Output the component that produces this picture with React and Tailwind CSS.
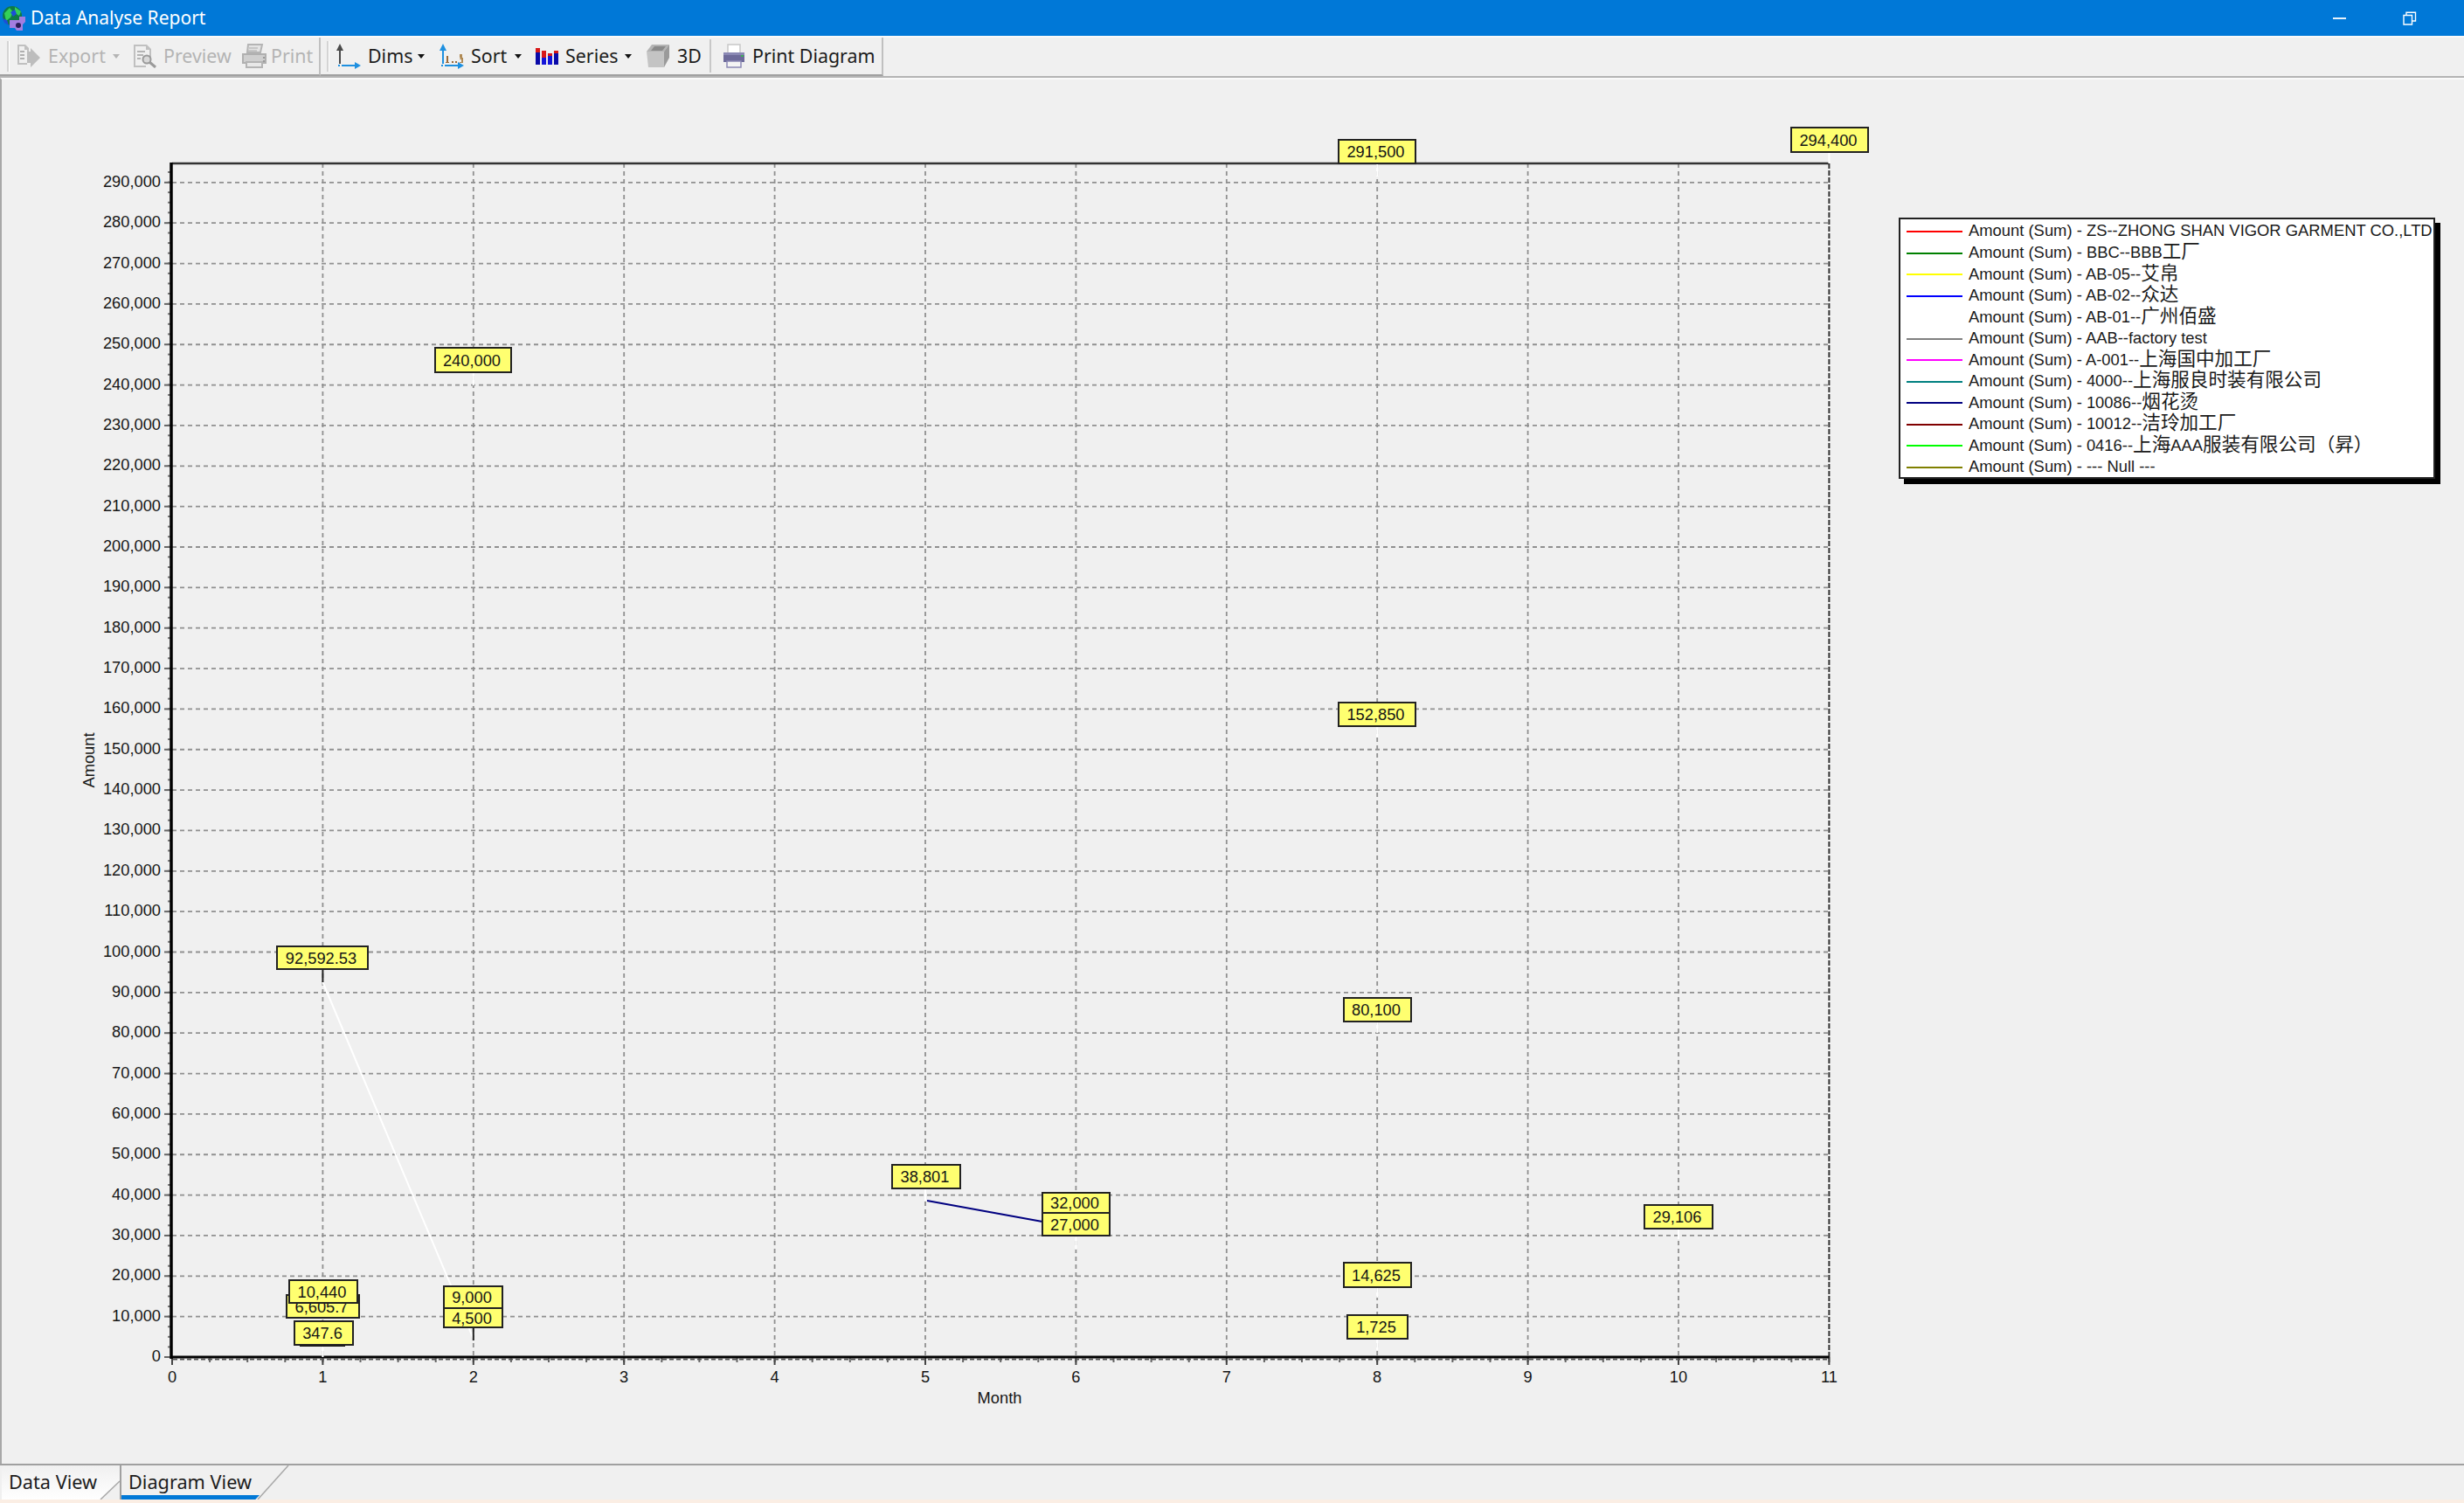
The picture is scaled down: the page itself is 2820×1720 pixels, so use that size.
import React from 'react'

const uiFont = 'font-[Noto_Sans,sans-serif]'
const chartFont = 'font-[Liberation_Sans,Noto_Sans_CJK_SC,sans-serif]'

const X0 = 197
const STEP_X = 172.4
const Y0 = 1553
const STEP_Y = 46.35
const TOP = 187
const RIGHT = X0 + STEP_X * 11

const xAt = (n) => X0 + STEP_X * n
const yAt = (v) => Y0 - (v / 10000) * STEP_Y

const yTicks = Array.from({ length: 30 }, (_, i) => i)
const xTicks = Array.from({ length: 12 }, (_, i) => i)
const minorY = Array.from({ length: 118 }, (_, i) => i)
const minorX = Array.from({ length: 45 }, (_, i) => i)

// boxes are listed bottom to top, same as the chart paints them
const boxes = [
  { t: '92,592.53', x: 317, y: 1083, w: 104, h: 26 },
  { t: '6,605.7', x: 328, y: 1482, w: 83, h: 26 },
  { t: '10,440', x: 331, y: 1465, w: 78, h: 26 },
  { t: '347.6', x: 337, y: 1512, w: 67, h: 27 },
  { t: '4,500', x: 508, y: 1497, w: 67, h: 22 },
  { t: '9,000', x: 508, y: 1472, w: 67, h: 25 },
  { t: '240,000', x: 498, y: 398, w: 87, h: 28 },
  { t: '38,801', x: 1021, y: 1333, w: 78, h: 27 },
  { t: '27,000', x: 1193, y: 1388, w: 77, h: 26 },
  { t: '32,000', x: 1193, y: 1365, w: 77, h: 23 },
  { t: '291,500', x: 1532, y: 160, w: 88, h: 27 },
  { t: '152,850', x: 1532, y: 804, w: 88, h: 27 },
  { t: '80,100', x: 1538, y: 1142, w: 77, h: 27 },
  { t: '14,625', x: 1538, y: 1445, w: 77, h: 28 },
  { t: '1,725', x: 1542, y: 1505, w: 69, h: 27 },
  { t: '29,106', x: 1882, y: 1379, w: 78, h: 27 },
  { t: '294,400', x: 2050, y: 146, w: 88, h: 28 },
]

const whiteStems = [
  [xAt(1), 1539, 1553],
  [xAt(2), 426, 441],
  [xAt(5), 1360, 1374],
  [xAt(6), 1414, 1430],
  [xAt(8), 187, 202],
  [xAt(8), 831, 844],
  [xAt(8), 1169, 1182],
  [xAt(8), 1473, 1485],
  [xAt(8), 1532, 1545],
  [xAt(10), 1406, 1418],
  [xAt(11), 174, 187],
]

const legend = [
  ['#ff0000', 'Amount (Sum) - ZS--ZHONG SHAN VIGOR GARMENT CO.,LTD'],
  ['#008000', 'Amount (Sum) - BBC--BBB工厂'],
  ['#ffff00', 'Amount (Sum) - AB-05--艾帛'],
  ['#0000ff', 'Amount (Sum) - AB-02--众达'],
  ['#ffffff', 'Amount (Sum) - AB-01--广州佰盛'],
  ['#808080', 'Amount (Sum) - AAB--factory test'],
  ['#ff00ff', 'Amount (Sum) - A-001--上海国中加工厂'],
  ['#008080', 'Amount (Sum) - 4000--上海服良时装有限公司'],
  ['#000080', 'Amount (Sum) - 10086--烟花烫'],
  ['#800000', 'Amount (Sum) - 10012--洁玲加工厂'],
  ['#00ff00', 'Amount (Sum) - 0416--上海AAA服装有限公司（昇）'],
  ['#808000', 'Amount (Sum) - --- Null ---'],
]

function AppIcon() {
  return (
    <svg width="30" height="30" viewBox="0 0 30 30" className="shrink-0">
      <circle cx="12" cy="12" r="11" fill="#0f7a45" />
      <path d="M3 9l6-6 4 5-3 6-5 4zM15 2l7 5-2 5-5-3z" fill="#34d058" />
      <path d="M10 8l5-3 2 5-4 3zM1 15l5 2 2 6-5-3z" fill="#1d4ed8" />
      <path d="M9 17h11v-4h7v6l-3 3v7h-7l-2-3H9z" fill="#a27de0" />
      <circle cx="19" cy="23" r="3" fill="#2a1a55" />
    </svg>
  )
}

function ExportIcon() {
  return (
    <svg width="28" height="28" viewBox="0 0 28 28">
      <path d="M1 1h9l4 4v5h-2V7H9V3H3v19h9v2H1z" fill="#c0c0c0" />
      <path d="M4 8h5v2H4zM4 12h5v2H4zM4 16h5v2H4z" fill="#b0b0b0" />
      <path d="M12 9h4V5l11 11-11 11v-5h-4z" fill="#bdbdbd" />
    </svg>
  )
}

function PreviewIcon() {
  return (
    <svg width="28" height="28" viewBox="0 0 28 28">
      <path d="M1 1h15l5 5v9h-2V7h-4V3H3v22h12v2H1z" fill="#c0c0c0" />
      <path d="M5 8h9v2H5zM5 12h7v2H5zM5 16h4v2H5z" fill="#b4b4b4" />
      <circle cx="16" cy="18" r="4.5" fill="#d8d8d8" stroke="#9a9a9a" strokeWidth="2" />
      <path d="M19 21l7 6" stroke="#9a9a9a" strokeWidth="3" />
    </svg>
  )
}

function PrintIcon() {
  return (
    <svg width="30" height="28" viewBox="0 0 30 28">
      <path d="M8 1h16l-2 9H7z" fill="#e4e4e4" stroke="#b4b4b4" strokeWidth="2" />
      <path d="M2 12h26v10H2z" fill="#cfcfcf" stroke="#b0b0b0" strokeWidth="2" />
      <path d="M6 21h18v6H6z" fill="#e8e8e8" stroke="#b4b4b4" strokeWidth="2" />
      <path d="M9 5h10M8 8h10" stroke="#bdbdbd" strokeWidth="1.5" />
      <path d="M25 15h2v2h-2zM25 19h2v2h-2z" fill="#9a9a9a" />
    </svg>
  )
}

function DimsIcon() {
  return (
    <svg width="28" height="30" viewBox="0 0 28 30">
      <path d="M4 1L0 9h3v15h2V9h3z" fill="#4a4a4a" />
      <path d="M2 26h2M6 26h16" stroke="#1e90e0" strokeWidth="2" />
      <path d="M21 22l7 4-7 4z" fill="#1e90e0" />
    </svg>
  )
}

function SortIcon() {
  return (
    <svg width="28" height="30" viewBox="0 0 28 30">
      <path d="M4 1L0 9h3v15h2V9h3z" fill="#1e90e0" />
      <path d="M2 26h2M6 26h16" stroke="#1e90e0" strokeWidth="2" />
      <path d="M21 22l7 4-7 4z" fill="#1e90e0" />
      <path d="M8 15h2v7H8zM7 22h4v1H7zM14 21h2v2h-2zM18 21h2v2h-2z" fill="#9a6a3a" />
      <path d="M23 13h3v4h-3zM24 17h3v6h-4v-1h2v-3h-2z" fill="#b08a55" />
    </svg>
  )
}

function SeriesIcon() {
  return (
    <svg width="26" height="20" viewBox="0 0 26 20">
      <path d="M0 1h5v19H0z" fill="#0a0aa8" />
      <path d="M0 1h5v5H0z" fill="#d81818" />
      <path d="M7 4h5v16H7z" fill="#1414d8" />
      <path d="M7 4h5v8H7z" fill="#d81818" />
      <path d="M14 7h5v13h-5z" fill="#1414d8" />
      <path d="M14 7h5v3h-5z" fill="#d81818" />
      <path d="M21 4h5v16h-5z" fill="#0a0aa8" />
      <path d="M21 4h5v3h-5z" fill="#d81818" />
    </svg>
  )
}

function BoxIcon() {
  return (
    <svg width="28" height="28" viewBox="0 0 28 28">
      <path d="M7 1h20l-6 8H1z" fill="#b4b4b4" />
      <path d="M10 3h13l-4 5H6z" fill="#8a8a8a" />
      <path d="M1 9h20v18H3z" fill="#c4c4c4" />
      <path d="M21 9l6-8v15l-6 11z" fill="#9a9a9a" />
    </svg>
  )
}

function PrinterIcon() {
  return (
    <svg width="26" height="28" viewBox="0 0 26 28">
      <path d="M6 1h14v10H6z" fill="#ffffff" stroke="#c8c8c8" strokeWidth="1.5" />
      <path d="M1 10h24v11H1z" fill="#6d6a9a" />
      <path d="M1 10h24v3H1z" fill="#8a88b4" />
      <path d="M5 20h16v7H5z" fill="#f4f4f4" stroke="#8a88b4" strokeWidth="1.5" />
      <path d="M21 13h3v2h-3z" fill="#3fae5a" />
    </svg>
  )
}

function Caret({ color = 'border-t-[#111]' }) {
  return <span className={`w-0 h-0 border-x-[4px] border-x-transparent border-t-[5px] ${color}`} />
}

function Grip() {
  return <span className="w-[2px] h-[35px] bg-[#d4d4d4] shadow-[1px_0_0_#fff] shrink-0" />
}

function Tool({ icon, label, width, disabled, caret, iconWidth, gap = 'ml-[8px]', className = '' }) {
  return (
    <div className={`flex items-center shrink-0 ${className}`}>
      <span className="flex justify-center shrink-0" style={{ width: iconWidth }}>{icon}</span>
      <span
        className={`${gap} whitespace-nowrap text-[21.4px] leading-none ${disabled ? 'text-[#b4b4b4]' : 'text-[#1c1c1c]'}`}
        style={{ width }}
      >
        {label}
      </span>
      {caret && <span className="ml-[8px] flex"><Caret color={disabled ? 'border-t-[#b4b4b4]' : 'border-t-[#111]'} /></span>}
    </div>
  )
}

function LegendText({ text }) {
  const parts = text.split(/([\u3000-\u9fff\uff00-\uffef]+)/)
  return (
    <span className="whitespace-nowrap text-[18.4px] leading-none text-[#1a1a1a]">
      {parts.map((part, i) =>
        i % 2 ? <span key={i} className="text-[21.6px]">{part}</span> : <span key={i}>{part}</span>
      )}
    </span>
  )
}

function Legend() {
  return (
    <div className={`mt-[158px] ml-[1px] w-[614px] h-[299px] bg-white border-2 border-[#222] shadow-[6px_6px_0_#000] pt-[2px] ${chartFont}`}>
      {legend.map(([color, text]) => (
        <div key={text} className="flex items-center h-[24.53px]">
          <span className="ml-[7px] w-[64px] h-[2px] shrink-0" style={{ background: color }} />
          <span className="ml-[7px]"><LegendText text={text} /></span>
        </div>
      ))}
    </div>
  )
}

function Chart() {
  return (
    <svg
      width="2170"
      height="1584"
      viewBox="2 91 2170 1584"
      className={`shrink-0 ${chartFont} text-[18.3px] fill-[#161616]`}
    >
      {yTicks.slice(1).map((i) => (
        <line key={i} x1={X0} x2={RIGHT} y1={yAt(i * 10000)} y2={yAt(i * 10000)} stroke="#909090" strokeWidth="1.8" strokeDasharray="5 4" />
      ))}
      {xTicks.slice(1, 11).map((i) => (
        <line key={i} x1={xAt(i)} x2={xAt(i)} y1={TOP} y2={Y0} stroke="#909090" strokeWidth="1.8" strokeDasharray="5 4" />
      ))}

      <line x1={RIGHT} x2={RIGHT} y1={TOP} y2={Y0} stroke="#333" strokeWidth="2" strokeDasharray="6 2" />
      <line x1={X0} x2={RIGHT} y1={TOP} y2={TOP} stroke="#333" strokeWidth="2.5" />

      {minorY.map((i) => (
        <line key={i} x1="192" x2="196" y1={Y0 - i * 11.59} y2={Y0 - i * 11.59} stroke="#777" strokeWidth="2" />
      ))}
      {minorX.map((i) => (
        <line key={i} x1={X0 + i * 43.1} x2={X0 + i * 43.1} y1="1553" y2="1559" stroke="#666" strokeWidth="2" />
      ))}
      {yTicks.map((i) => (
        <line key={i} x1="188" x2="196" y1={yAt(i * 10000)} y2={yAt(i * 10000)} stroke="#666" strokeWidth="2" />
      ))}
      {xTicks.map((i) => (
        <line key={i} x1={xAt(i)} x2={xAt(i)} y1="1553" y2="1562" stroke="#444" strokeWidth="2" />
      ))}

      <line x1="196" x2="196" y1={TOP - 1} y2="1555" stroke="#000" strokeWidth="3.5" />
      <line x1="195" x2={RIGHT} y1="1553" y2="1553" stroke="#000" strokeWidth="3" />
      <line x1="198" x2={RIGHT} y1="1555.5" y2="1555.5" stroke="#555" strokeWidth="2" strokeDasharray="5 3" />

      <line x1={xAt(1)} y1="1124" x2={xAt(2)} y2="1532" stroke="#ffffff" strokeWidth="2" />
      <line x1="1061" y1="1374" x2={xAt(6)} y2="1405" stroke="#000080" strokeWidth="2" />

      {whiteStems.map(([x, y1, y2]) => (
        <line key={`${x}-${y1}`} x1={x} x2={x} y1={y1} y2={y2} stroke="#ffffff" strokeWidth="2" />
      ))}
      <line x1={xAt(1)} x2={xAt(1)} y1="1109" y2="1124" stroke="#222" strokeWidth="2" />
      <line x1={xAt(2)} x2={xAt(2)} y1="1519" y2="1534" stroke="#222" strokeWidth="2" />
      <line x1="343" x2="395" y1="1540" y2="1540" stroke="#111" strokeWidth="2" />

      {boxes.map((b) => (
        <g key={b.t}>
          <rect x={b.x} y={b.y} width={b.w} height={b.h} fill="#ffff70" stroke="#222" strokeWidth="2" />
          <text x={b.x + b.w / 2 - 1.5} y={b.y + b.h / 2} textAnchor="middle" dominantBaseline="central">{b.t}</text>
        </g>
      ))}

      {yTicks.map((i) => (
        <text key={i} x="184" y={yAt(i * 10000) - 1.5} textAnchor="end" dominantBaseline="central">
          {i === 0 ? '0' : `${i * 10},000`}
        </text>
      ))}
      {xTicks.map((i) => (
        <text key={i} x={xAt(i)} y="1575" textAnchor="middle" dominantBaseline="central">{i}</text>
      ))}
      <text x="1144" y="1599" textAnchor="middle" dominantBaseline="central">Month</text>
      <text x="101" y="870" textAnchor="middle" dominantBaseline="central" transform="rotate(-90 101 870)">Amount</text>
    </svg>
  )
}

export default function App() {
  return (
    <div className={`w-[2820px] h-[1720px] flex flex-col bg-[#f0f0f0] overflow-hidden ${uiFont}`}>
      <header className="h-[41px] shrink-0 bg-[#0078d7] flex items-center pl-[2px]">
        <AppIcon />
        <span className="ml-[3px] text-white text-[21px] leading-none">Data Analyse Report</span>
        <span className="ml-auto w-[15px] h-[2px] bg-white/90" />
        <svg width="16" height="16" viewBox="0 0 16 16" className="ml-[65px] mr-[54px]" fill="none" stroke="#fff" strokeWidth="1.4">
          <path d="M1 4.5h9.5V15H1z" />
          <path d="M4 4V1.2h10.5V11H11" />
        </svg>
      </header>

      <div className="h-[48px] shrink-0 flex border-t-2 border-[#f9f9f9] border-b-2 border-b-[#b4b4b4]">
        <div className="w-[367px] shrink-0 flex items-center border-r-2 border-[#c0c0c0] border-b-2 border-b-[#a0a0a0]">
          <span className="ml-[8px] flex"><Grip /></span>
          <Tool className="ml-[9px]" icon={<ExportIcon />} iconWidth={28} label="Export" width={66} disabled caret />
          <Tool className="ml-[15px]" icon={<PreviewIcon />} iconWidth={28} label="Preview" width={76} gap="ml-[7px]" disabled />
          <Tool className="ml-[13px]" icon={<PrintIcon />} iconWidth={30} label="Print" width={45} gap="ml-[4px]" disabled />
        </div>
        <div className="w-[644px] shrink-0 flex items-center border-r-2 border-[#c0c0c0] border-b-2 border-b-[#a0a0a0]">
          <span className="ml-[7px] flex"><Grip /></span>
          <Tool className="ml-[9px]" icon={<DimsIcon />} iconWidth={28} label="Dims" width={49} caret />
          <Tool className="ml-[17px]" icon={<SortIcon />} iconWidth={28} label="Sort" width={42} caret />
          <Tool className="ml-[16px]" icon={<SeriesIcon />} iconWidth={26} label="Series" width={60} caret />
          <Tool className="ml-[16px]" icon={<BoxIcon />} iconWidth={28} label="3D" width={27} />
          <span className="ml-[10px] w-[2px] h-[38px] bg-[#c8c8c8] shrink-0" />
          <Tool className="ml-[13px]" icon={<PrinterIcon />} iconWidth={26} label="Print Diagram" width={138} />
        </div>
      </div>

      <main className="flex-1 min-h-0 flex items-start border-l-2 border-[#a8a8a8] border-t-2 border-t-[#fafafa]">
        <Chart />
        <Legend />
      </main>

      <footer className="h-[45px] shrink-0 flex flex-col border-t-2 border-[#a0a0a0]">
        <div className="flex-1 min-h-0 flex relative">
          <div className="w-[135px] shrink-0 ml-[2px] flex items-center pl-[8px] text-[21.7px] text-[#1c1c1c] whitespace-nowrap bg-gradient-to-b from-[#f0f0f0] to-white [clip-path:polygon(0_0,100%_0,100%_46%,84%_100%,0_100%)]">
            Data View
          </div>
          <div className="w-[193px] shrink-0 relative flex items-center pl-[8px] text-[21.7px] text-[#1c1c1c] whitespace-nowrap border-l-2 border-[#a0a0a0]">
            Diagram View
            <span className="absolute left-0 bottom-0 w-[158px] h-[5px] bg-[#0078d7] [clip-path:polygon(0_0,100%_0,97%_100%,0_100%)]" />
          </div>
          <svg width="340" height="39" viewBox="0 0 340 39" className="absolute left-0 top-0" fill="none" stroke="#a8a8a8" strokeWidth="1.5">
            <path d="M137 18L115 39" />
            <path d="M330 0L295 39" />
          </svg>
        </div>
        <div className="h-[4px] shrink-0 bg-[#fbeee4]" />
      </footer>
    </div>
  )
}
